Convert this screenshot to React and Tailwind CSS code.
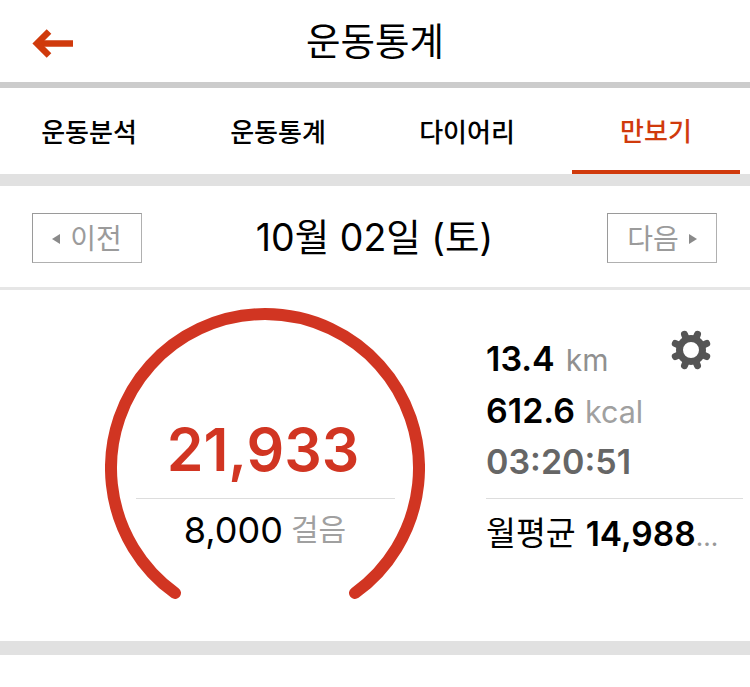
const teeth = [0, 45, 90, 135, 180, 225, 270, 315];
const font = { fontFamily: '"Inter", "Noto Sans CJK KR", sans-serif' };

function BackArrow() {
  return (
    <svg width="42" height="30" viewBox="0 0 42 30" fill="none" stroke="#d03a0c" strokeWidth="6.5">
      <path d="M41 14.5H5" />
      <path d="M17 2.5L5 14.5L17 26.5" />
    </svg>
  );
}

function Gear() {
  return (
    <svg width="42" height="42" viewBox="0 0 42 42" fill="none" stroke="#555555">
      <circle cx="21" cy="21" r="11.5" strokeWidth="7" />
      {teeth.map((a) => (
        <line key={a} x1="21" y1="7" x2="21" y2="4" strokeWidth="7" strokeLinecap="round" transform={`rotate(${a + 22.5} 21 21)`} />
      ))}
    </svg>
  );
}

function Gauge() {
  return (
    <svg className="absolute inset-0" width="320" height="300" viewBox="0 0 320 300" fill="none">
      <path d="M70 285A154 154 0 1 1 250 285" stroke="#d13522" strokeWidth="12" strokeLinecap="round" />
    </svg>
  );
}

function NavButton({ label, dir }) {
  return (
    <div className="flex h-[50px] w-[110px] items-center justify-center gap-[10px] border border-[#b0b0b0] border-t-[#9a9a9a] border-l-[#9a9a9a] pt-[2px] text-[28px] text-[#9b9b9b]">
      {dir === "prev" && <span className="h-0 w-0 border-y-[5px] border-r-[8px] border-y-transparent border-r-[#8a8a8a]" />}
      <span>{label}</span>
      {dir === "next" && <span className="h-0 w-0 border-y-[5px] border-l-[8px] border-y-transparent border-l-[#8a8a8a]" />}
    </div>
  );
}

export default function App() {
  return (
    <div className="h-[687px] w-[750px] overflow-hidden bg-white text-black" style={font}>
      <header className="relative flex h-[88px] items-center justify-center border-b-[6px] border-[#cccccc] pt-[3px]">
        <div className="absolute left-[32px] top-[29px] flex"><BackArrow /></div>
        <h1 className="text-[37.5px] font-normal">운동통계</h1>
      </header>

      <nav className="flex h-[98px] gap-[21px] border-b-[12px] border-[#e1e1e1] pl-[5px] text-[26px] font-medium">
        <div className="flex h-[86px] w-[168px] items-center justify-center pt-[3px]">운동분석</div>
        <div className="flex h-[86px] w-[168px] items-center justify-center pt-[3px]">운동통계</div>
        <div className="flex h-[86px] w-[168px] items-center justify-center pt-[3px]">다이어리</div>
        <div className="flex h-[86px] w-[168px] items-center justify-center border-b-4 border-[#d03a0c] pt-[5px] text-[#d03a0c]">만보기</div>
      </nav>

      <section className="flex h-[104px] items-start justify-between border-b-[3px] border-[#e6e6e6] pl-[32px] pr-[33px] pt-[27px]">
        <NavButton label="이전" dir="prev" />
        <div className="text-[37.5px] leading-[50px]">10월 02일 (토)</div>
        <NavButton label="다음" dir="next" />
      </section>

      <main className="relative flex h-[351px] items-start pl-[105px] pt-[18px]">
        <div className="relative h-[300px] w-[320px]">
          <Gauge />
          <div className="flex flex-col items-center pt-[112px]">
            <div className="pr-[4px] text-[59px] font-semibold leading-[60px] text-[#d13522]">21,933</div>
            <div className="mt-[18px] flex h-[54px] w-[259px] items-center justify-center gap-[8px] border-t border-[#dddddd] pt-[8px]">
              <span className="text-[36px]">8,000</span>
              <span className="text-[30px] text-[#a0a0a0]">걸음</span>
            </div>
          </div>
        </div>

        <div className="ml-[61px] w-[257px] pt-[25px]">
          <div className="flex h-[52px] items-baseline gap-[11px]">
            <span className="text-[34px] font-semibold">13.4</span>
            <span className="text-[30px] text-[#909090]">km</span>
          </div>
          <div className="flex h-[51px] items-baseline gap-[10px]">
            <span className="text-[34px] font-semibold">612.6</span>
            <span className="text-[30.5px] text-[#a0a0a0]">kcal</span>
          </div>
          <div className="h-[62px] text-[34px] font-semibold text-[#666666]">03:20:51</div>
          <div className="flex h-[72px] items-center gap-[10px] border-t border-[#dddddd]">
            <span className="text-[32.5px]">월평균</span>
            <span className="text-[33.5px] font-semibold">14,988<span className="text-[26px] font-normal text-[#999999]">...</span></span>
          </div>
        </div>

        <div className="absolute left-[670px] top-[39px] flex"><Gear /></div>
      </main>

      <div className="h-[14px] bg-[#e1e1e1]" />
    </div>
  );
}
